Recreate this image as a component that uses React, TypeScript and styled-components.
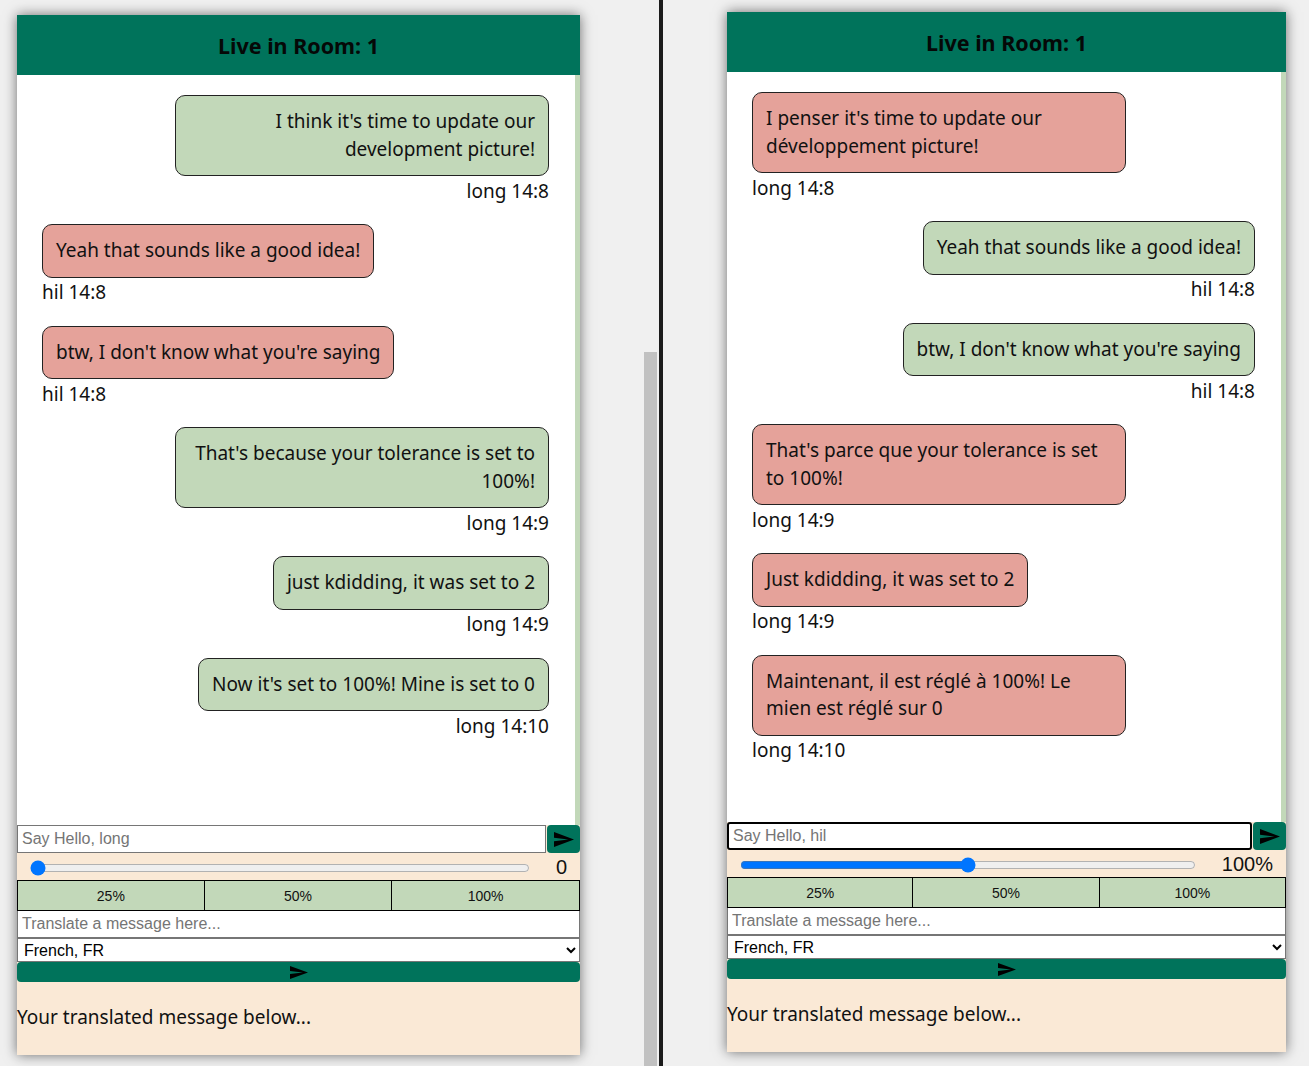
import React from "react";
import styled, { createGlobalStyle } from "styled-components";

const GREEN = "#00735b";
const LIGHT_GREEN = "#c2d8b9";
const RED = "#e5a29a";
const BEIGE = "#fae9d6";
const TEXT_FONT = `"Noto Sans", "Open Sans", sans-serif`;
const FORM_FONT = `"Liberation Sans", Arial, sans-serif`;

const GlobalStyle = createGlobalStyle`
  html, body {
    margin: 0;
    padding: 0;
    background: #f0f0f0;
  }
  * {
    box-sizing: border-box;
  }
`;

const Screen = styled.div`
  display: flex;
  height: 1066px;
  overflow: hidden;
  background: #f0f0f0;
`;

const Pane = styled.div<{ $width: number; $top: number; $left: number }>`
  width: ${(p) => p.$width}px;
  flex-shrink: 0;
  padding: ${(p) => p.$top}px 0 0 ${(p) => p.$left}px;
`;

const Scrollbar = styled.div`
  width: 13px;
  margin-right: 2px;
  padding-top: 352px;
  flex-shrink: 0;
`;

const Thumb = styled.div`
  height: 100%;
  background: #c1c1c1;
`;

const Divider = styled.div`
  width: 4px;
  flex-shrink: 0;
  background: #1b1b1b;
`;

const Window = styled.div<{ $width: number }>`
  width: ${(p) => p.$width}px;
  height: 1040px;
  display: flex;
  flex-direction: column;
  background: ${BEIGE};
  box-shadow: 0 0 12px rgba(0, 0, 0, 0.55);
`;

const Header = styled.header`
  height: 60px;
  flex-shrink: 0;
  display: flex;
  align-items: center;
  justify-content: center;
  background: ${GREEN};
  font-family: ${TEXT_FONT};
  font-weight: 700;
  font-size: 21.5px;
  color: #050807;
`;

const MessageList = styled.div`
  height: 750px;
  flex-shrink: 0;
  display: flex;
  flex-direction: column;
  padding: 20px 26px 0 25px;
  background: #fff;
  border-right: 5px solid ${LIGHT_GREEN};
  font-family: ${TEXT_FONT};
  font-size: 19px;
  line-height: 27.5px;
  color: #111;
`;

const MessageGroup = styled.div<{ $mine: boolean }>`
  display: flex;
  flex-direction: column;
  align-items: ${(p) => (p.$mine ? "flex-end" : "flex-start")};
  margin-bottom: 19px;
`;

const Bubble = styled.div<{ $mine: boolean }>`
  max-width: 374px;
  padding: 12px 13px;
  border: 1px solid #222;
  border-radius: 10px;
  background: ${(p) => (p.$mine ? LIGHT_GREEN : RED)};
  text-align: ${(p) => (p.$mine ? "right" : "left")};
`;

const Meta = styled.div`
  margin-top: 1.5px;
`;

const InputRow = styled.div`
  display: flex;
  height: 28px;
  flex-shrink: 0;
`;

const ChatInput = styled.input<{ $focused?: boolean }>`
  flex: 1;
  min-width: 0;
  height: 28px;
  margin: 0 1px 0 0;
  padding: 1px 4px;
  font-family: ${FORM_FONT};
  font-size: 16px;
  background: #fff;
  border: ${(p) => (p.$focused ? "2px solid #000" : "1px solid #767676")};
  border-radius: ${(p) => (p.$focused ? "3px" : "0")};
  outline: none;
  &::placeholder {
    color: #757575;
  }
`;

const SendButton = styled.button<{ $wide?: boolean }>`
  display: flex;
  align-items: center;
  justify-content: center;
  width: ${(p) => (p.$wide ? "100%" : "33px")};
  height: ${(p) => (p.$wide ? "20px" : "28px")};
  flex-shrink: 0;
  padding: 0;
  border: none;
  border-radius: 4px;
  background: ${GREEN};
  color: #000;
`;

const SliderRow = styled.div`
  display: flex;
  align-items: center;
  height: 27px;
  flex-shrink: 0;
  padding: 2px 13px 0 8px;
`;

const Range = styled.input`
  flex: 1;
  min-width: 0;
  margin: 0 26px 0 5px;
  accent-color: #0075ff;
`;

const SliderValue = styled.span`
  font-family: ${FORM_FONT};
  font-size: 20px;
  color: #111;
`;

const PresetRow = styled.div`
  display: grid;
  grid-template-columns: 1fr 1fr 1fr;
  height: 31px;
  flex-shrink: 0;
`;

const PresetButton = styled.button`
  height: 31px;
  padding: 0;
  margin: 0;
  border: 1px solid #000;
  border-left-width: 0;
  background: ${LIGHT_GREEN};
  font-family: ${FORM_FONT};
  font-size: 14px;
  color: #111;
  &:first-child {
    border-left-width: 1px;
  }
`;

const TranslateInput = styled.input`
  height: 27px;
  flex-shrink: 0;
  margin: 0;
  padding: 1px 4px;
  font-family: ${FORM_FONT};
  font-size: 16px;
  background: #fff;
  border: 1px solid #767676;
  border-top: none;
  outline: none;
  &::placeholder {
    color: #757575;
  }
`;

const LangSelect = styled.select`
  height: 24px;
  flex-shrink: 0;
  margin: 0;
  padding: 0 2px;
  font-family: ${FORM_FONT};
  font-size: 16px;
  color: #000;
  background: #fff;
  border: 1px solid #767676;
  border-radius: 0;
`;

const Result = styled.p`
  margin: 22px 0 0 0;
  font-family: ${TEXT_FONT};
  font-size: 19px;
  line-height: 27px;
  color: #111;
`;

type Message = { text: string; user: string; time: string };

const leftMessages: Message[] = [
  { text: "I think it's time to update our development picture!", user: "long", time: "14:8" },
  { text: "Yeah that sounds like a good idea!", user: "hil", time: "14:8" },
  { text: "btw, I don't know what you're saying", user: "hil", time: "14:8" },
  { text: "That's because your tolerance is set to 100%!", user: "long", time: "14:9" },
  { text: "just kdidding, it was set to 2", user: "long", time: "14:9" },
  { text: "Now it's set to 100%! Mine is set to 0", user: "long", time: "14:10" },
];

const rightMessages: Message[] = [
  { text: "I penser it's time to update our développement picture!", user: "long", time: "14:8" },
  { text: "Yeah that sounds like a good idea!", user: "hil", time: "14:8" },
  { text: "btw, I don't know what you're saying", user: "hil", time: "14:8" },
  { text: "That's parce que your tolerance is set to 100%!", user: "long", time: "14:9" },
  { text: "Just kdidding, it was set to 2", user: "long", time: "14:9" },
  { text: "Maintenant, il est réglé à 100%! Le mien est réglé sur 0", user: "long", time: "14:10" },
];

function SendIcon({ width = 20, height = 15 }: { width?: number; height?: number }) {
  return (
    <svg width={width} height={height} viewBox="2 3 21 18" preserveAspectRatio="none">
      <path d="M2.01 21L23 12 2.01 3 2 10l15 2-15 2z" fill="#000" />
    </svg>
  );
}

type ChatProps = {
  me: string;
  messages: Message[];
  width: number;
  slider: number;
  sliderLabel: string;
  focused?: boolean;
};

function ChatWindow({ me, messages, width, slider, sliderLabel, focused }: ChatProps) {
  return (
    <Window $width={width}>
      <Header>Live in Room: 1</Header>
      <MessageList>
        {messages.map((m, i) => {
          const mine = m.user === me;
          return (
            <MessageGroup key={i} $mine={mine}>
              <Bubble $mine={mine}>{m.text}</Bubble>
              <Meta>
                {m.user} {m.time}
              </Meta>
            </MessageGroup>
          );
        })}
      </MessageList>
      <InputRow>
        <ChatInput placeholder={`Say Hello, ${me}`} $focused={focused} readOnly />
        <SendButton>
          <SendIcon />
        </SendButton>
      </InputRow>
      <SliderRow>
        <Range type="range" min={0} max={100} defaultValue={slider} />
        <SliderValue>{sliderLabel}</SliderValue>
      </SliderRow>
      <PresetRow>
        <PresetButton>25%</PresetButton>
        <PresetButton>50%</PresetButton>
        <PresetButton>100%</PresetButton>
      </PresetRow>
      <TranslateInput placeholder="Translate a message here..." readOnly />
      <LangSelect defaultValue="fr">
        <option value="fr">French, FR</option>
        <option value="es">Spanish, ES</option>
        <option value="de">German, DE</option>
      </LangSelect>
      <SendButton $wide>
        <SendIcon width={18} height={13} />
      </SendButton>
      <Result>Your translated message below...</Result>
    </Window>
  );
}

export default function App() {
  return (
    <>
      <GlobalStyle />
      <Screen>
        <Pane $width={644} $top={15} $left={17}>
          <ChatWindow me="long" messages={leftMessages} width={563} slider={0} sliderLabel="0" />
        </Pane>
        <Scrollbar>
          <Thumb />
        </Scrollbar>
        <Divider />
        <Pane $width={646} $top={12} $left={64}>
          <ChatWindow
            me="hil"
            messages={rightMessages}
            width={559}
            slider={50}
            sliderLabel="100%"
            focused
          />
        </Pane>
      </Screen>
    </>
  );
}
